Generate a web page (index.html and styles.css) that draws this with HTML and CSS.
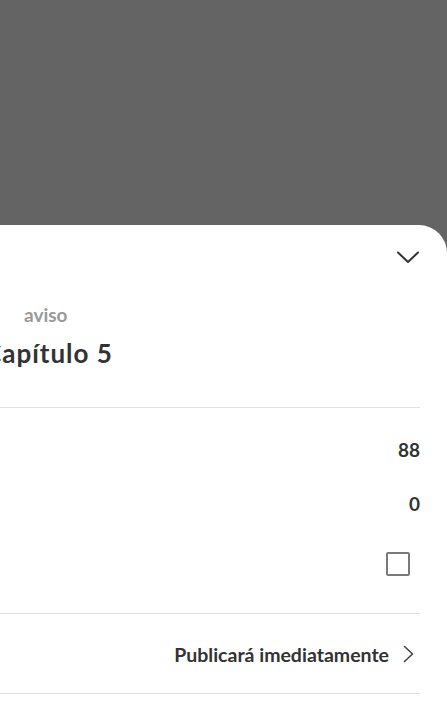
FILE: index.html
```html
<!DOCTYPE html>
<html lang="pt">
<head>
<meta charset="UTF-8">
<meta name="viewport" content="width=device-width, initial-scale=1.0">
<title>Publicar capítulo</title>
<link rel="stylesheet" href="styles.css">
</head>
<body>
<div class="backdrop"></div>
<div class="sheet">
    <div class="sheet-head">
        <svg class="close" width="22" height="13" viewBox="0 0 22 13"><path d="M1 1.5 L11 11 L21 1.5" fill="none" stroke="#333" stroke-width="2" stroke-linecap="round" stroke-linejoin="round"/></svg>
    </div>
    <div class="title-block">
        <div class="label">aviso</div>
        <div class="title">Capítulo 5</div>
    </div>
    <div class="group counts">
        <div class="row"><span class="value">88</span></div>
        <div class="row"><span class="value">0</span></div>
        <div class="row tall"><span class="checkbox"></span></div>
    </div>
    <div class="group schedule">
        <div class="row link">
            <span class="value big">Publicará imediatamente</span>
            <svg class="arrow" width="11" height="18" viewBox="0 0 11 18"><path d="M1.5 1.5 L9.5 9 L1.5 16.5" fill="none" stroke="#444" stroke-width="1.6" stroke-linecap="round" stroke-linejoin="round"/></svg>
        </div>
    </div>
</div>
</body>
</html>
```

FILE: styles.css
```css
body {
    margin: 0;
    height: 716px;
    overflow: hidden;
    background: #646464;
    font-family: Lato, 'Noto Sans', sans-serif;
    color: #333;
}
.backdrop {
    height: 225px;
}
.sheet {
    background: #fff;
    border-top-right-radius: 28px;
    height: 491px;
    padding-right: 27px;
}
.sheet-head {
    display: flex;
    justify-content: flex-end;
    height: 39px;
    padding-top: 26px;
    box-sizing: border-box;
    padding-right: 1px;
}
.title-block {
    padding-top: 39px;
    padding-bottom: 38px;
    border-bottom: 1px solid #e2e2e2;
}
.label {
    padding-left: 24px;
    line-height: 24px;
    font-size: 19px;
    font-weight: 700;
    color: #9a9a9a;
}
.title {
    margin-left: -16px;
    margin-top: 10px;
    line-height: 32px;
    font-size: 26px;
    letter-spacing: 1px;
    font-weight: 700;
    color: #333;
}
.group {
    border-bottom: 1px solid #e2e2e2;
}
.counts {
    padding: 14px 0 15px;
}
.schedule {
    padding: 12px 0 11px;
}
.row {
    display: flex;
    justify-content: flex-end;
    align-items: center;
    height: 54px;
}
.row.tall {
    height: 68px;
}
.value {
    font-size: 19px;
    font-weight: 700;
}
.value.big {
    font-size: 19.5px;
}
.checkbox {
    width: 20px;
    height: 20px;
    border: 2px solid #7a7a7a;
    border-radius: 2px;
    margin-right: 10px;
}
.link {
    height: 56px;
}
.arrow {
    margin-left: 14px;
    margin-right: 6px;
}
```
